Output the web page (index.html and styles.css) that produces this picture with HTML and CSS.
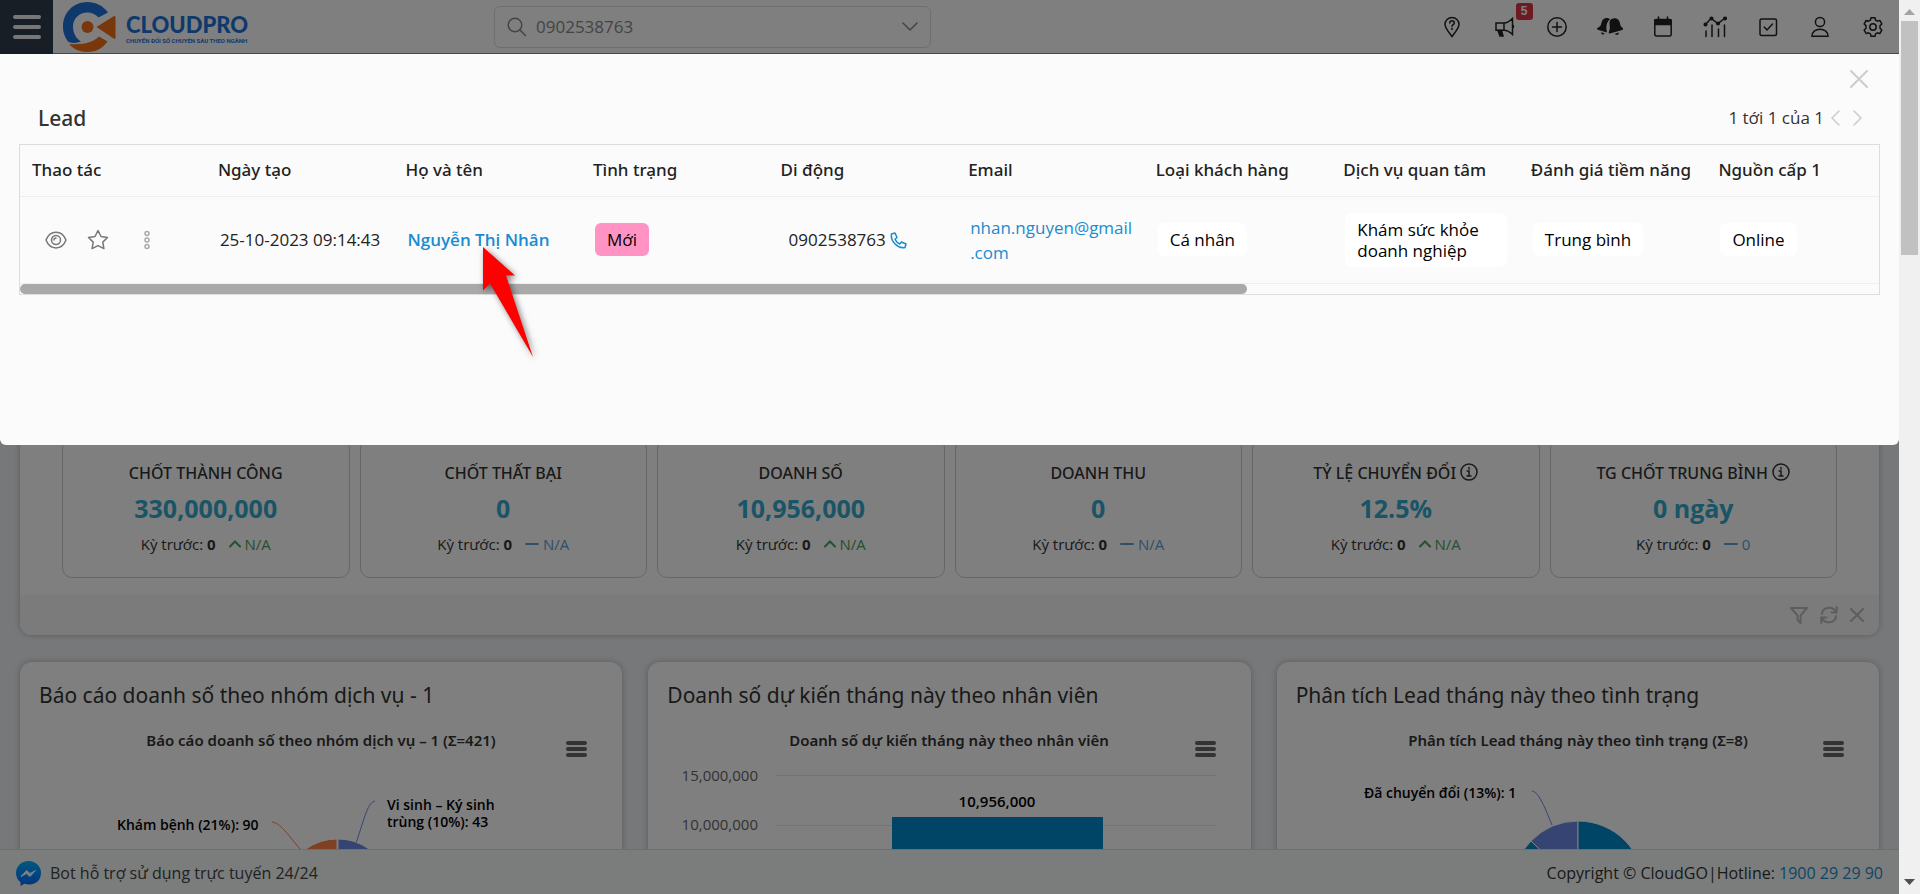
FILE: index.html
```html
<!DOCTYPE html>
<html lang="vi">
<head>
<meta charset="utf-8">
<title>CloudPro</title>
<link rel="stylesheet" href="styles.css">
</head>
<body>
<div class="screen">
  <div class="page">
    <header class="topbar">
      <button class="menu-button" aria-label="Menu"><span></span><span></span><span></span></button>
      <a class="logo" href="#" aria-label="CloudPro">
        <svg class="logo-mark" width="54" height="52" viewBox="0 0 54 52">
          <path d="M46 11.5C41 4.500 33.500 1 25.500 1 11 1 1 12 1 25.500c0 7 2.500 12 5.500 15.500 5 1.500 9 1 12.500-.5-5-3-8-8.500-8-15 0-8 6.500-14 14.500-14 4.500 0 8.500 2 11 5z" fill="#1e73d8"/>
          <path d="M7 43c4 5 11 8 18.500 8 8.500 0 15.500-4 20-10.500L37 35.500c-6 6-16 8.500-30 7.500z" fill="#f07018"/>
          <circle cx="25.500" cy="26" r="6" fill="#f07018"/>
          <path d="M34.500 26 52 15q1.500-.5 1.500 1.500v20q0 2-1.500 1.200z" fill="#f07018"/>
        </svg>
        <span class="logo-text"><b>CLOUDPRO</b><small>CHUYỂN ĐỔI SỐ CHUYÊN SÂU THEO NGÀNH</small></span>
      </a>
      <div class="search">
        <svg width="20" height="20" viewBox="0 0 20 20" class="line"><circle cx="8" cy="8" r="6.800"/><path d="m13 13 5.500 5.500"/></svg>
        <input type="text" value="0902538763" aria-label="Tìm kiếm">
        <button aria-label="Mở rộng"><svg width="16" height="10" viewBox="0 0 16 10" class="line"><path d="m1 1 7 7 7-7"/></svg></button>
      </div>
      <nav class="tools">
        <button aria-label="Trợ giúp"><svg width="22" height="22" viewBox="0 0 22 22" class="line"><path d="M11 20.500C8 16.500 4 12 4 8.500a7 7 0 0 1 14 0c0 3.500-4 8-7 12z"/><path d="M8.800 7c.2-3 4.600-2.800 4.500 0 0 1.700-2.300 1.500-2.300 3.300M11 12.200v1.300"/></svg></button>
        <button aria-label="Thông báo tính năng"><svg width="22" height="22" viewBox="0 0 22 22" class="line"><path d="M2 7h8c3.500 0 6-2 8.500-4.500v16C16 16 13.500 14.200 10 14.200H2zM10 7v7M18.500 8.500q2 2 0 4"/><path d="M4 14.500 6 20h3l-1.500-5.500z" fill="currentColor"/></svg><span class="badge">5</span></button>
        <button aria-label="Thêm"><svg width="22" height="22" viewBox="0 0 22 22" class="line"><circle cx="11" cy="11" r="9.200"/><path d="M11 6.500v9M6.500 11h9"/></svg></button>
        <button aria-label="Chuông"><svg width="26" height="22" viewBox="0 0 26 22"><path d="M11.500 2.200C7 1 5 4 4.400 7c-.5 2.600-1.500 3.700-3.700 4.700-1 .6-.8 1.800 0 2l9.300 2.700c-1.200-5-.8-10.200 3-13.200zM4 16.200l3.500 1c-.6 2.200-3.300 1.500-3.500-1zM14.300 3c5.500-2.400 8 .8 8.600 4 .5 2.600.9 3.700 2.700 4.700.8.500.6 2-.2 2.200L12.700 17.600c-1.200-.2-1.200-1.200-.7-2.200C14.300 11 10.500 6.500 14.300 3zM18 17.800l4-1.200c0 2.600-3.200 3.200-4 1.200z" fill="currentColor"/></svg></button>
        <button aria-label="Lịch"><svg width="22" height="22" viewBox="0 0 22 22" class="line"><rect x="2.800" y="3.500" width="16.400" height="16.500" rx="1.500"/><path d="M3 4h16v4.500H3z" fill="currentColor"/><path d="M6.500 1v3M15.500 1v3"/></svg></button>
        <button aria-label="Báo cáo"><svg width="24" height="22" viewBox="0 0 24 22" class="line"><path d="m2.500 8.500 5.500-6 7 5 7-5.500M3 15v5.500M9 9v11.500M15.500 13v7.500M21.500 9v11.500"/><g fill="currentColor"><circle cx="2.500" cy="8.500" r="1.300"/><circle cx="8.500" cy="2.500" r="1.300"/><circle cx="15" cy="7.500" r="1.300"/><circle cx="22" cy="2.500" r="1.300"/></g></svg></button>
        <button aria-label="Công việc"><svg width="22" height="22" viewBox="0 0 22 22" class="line"><rect x="3" y="3" width="16.500" height="16.500" rx="1.500"/><path d="m7.200 11 2.800 3 5.500-6"/></svg></button>
        <button aria-label="Tài khoản"><svg width="22" height="22" viewBox="0 0 22 22" class="line"><circle cx="11" cy="6" r="4.600"/><path d="M3 20.300c0-9.500 16-9.500 16 0z"/></svg></button>
        <button aria-label="Cài đặt"><svg width="22" height="22" viewBox="0 0 22 22" class="line"><path d="M9 1.700h4l.6 2.500 1.800 1 2.400-.8 2 3.500L18 9.800v2.400l1.800 1.900-2 3.500-2.400-.8-1.800 1-.6 2.500H9l-.6-2.500-1.800-1-2.400.8-2-3.500L4 12.200V9.800L2.200 7.900l2-3.500 2.400.8 1.800-1z" stroke-linejoin="round"/><circle cx="11" cy="11" r="3.200"/></svg></button>
      </nav>
    </header>

    <main class="dashboard">
      <section class="kpi-panel">
        <div class="kpi-grid">
          <article class="kpi"><h3>CHỐT THÀNH CÔNG</h3><strong>330,000,000</strong><p>Kỳ trước: <b>0</b><span class="up"><svg width="12" height="8" viewBox="0 0 12 8" class="line bold"><path d="m1 6.500 5-5 5 5"/></svg> N/A</span></p></article>
          <article class="kpi"><h3>CHỐT THẤT BẠI</h3><strong>0</strong><p>Kỳ trước: <b>0</b><span class="flat"><svg width="14" height="8" viewBox="0 0 14 8" class="line bold"><path d="M1 4h12"/></svg> N/A</span></p></article>
          <article class="kpi"><h3>DOANH SỐ</h3><strong>10,956,000</strong><p>Kỳ trước: <b>0</b><span class="up"><svg width="12" height="8" viewBox="0 0 12 8" class="line bold"><path d="m1 6.500 5-5 5 5"/></svg> N/A</span></p></article>
          <article class="kpi"><h3>DOANH THU</h3><strong>0</strong><p>Kỳ trước: <b>0</b><span class="flat"><svg width="14" height="8" viewBox="0 0 14 8" class="line bold"><path d="M1 4h12"/></svg> N/A</span></p></article>
          <article class="kpi"><h3>TỶ LỆ CHUYỂN ĐỔI <svg class="line info" width="18" height="18" viewBox="0 0 18 18"><circle cx="9" cy="9" r="8"/><path d="M7.200 8H9v5M7 13h4M9 4.500v1.500"/></svg></h3><strong>12.5%</strong><p>Kỳ trước: <b>0</b><span class="up"><svg width="12" height="8" viewBox="0 0 12 8" class="line bold"><path d="m1 6.500 5-5 5 5"/></svg> N/A</span></p></article>
          <article class="kpi"><h3>TG CHỐT TRUNG BÌNH <svg class="line info" width="18" height="18" viewBox="0 0 18 18"><circle cx="9" cy="9" r="8"/><path d="M7.200 8H9v5M7 13h4M9 4.500v1.500"/></svg></h3><strong>0 ngày</strong><p>Kỳ trước: <b>0</b><span class="flat"><svg width="14" height="8" viewBox="0 0 14 8" class="line bold"><path d="M1 4h12"/></svg> 0</span></p></article>
        </div>
        <div class="panel-tools">
          <button aria-label="Lọc"><svg width="18" height="18" viewBox="0 0 18 18" class="line bold"><path d="M1 2h16l-6.500 7.500V17L7.500 14V9.500z" stroke-linejoin="round"/></svg></button>
          <button aria-label="Làm mới"><svg width="18" height="18" viewBox="0 0 18 18" class="line bold"><path d="M2 8c.5-7.500 11-8.500 14-2M16.700 1v5.500H11.500M16 10c-.5 7.500-11 8.500-14 2M1.300 17v-5.500h5.200"/></svg></button>
          <button aria-label="Đóng"><svg width="14" height="14" viewBox="0 0 14 14" class="line bold"><path d="m1 1 12 12M13 1 1 13"/></svg></button>
        </div>
      </section>

      <div class="charts">
        <section class="chart-card">
          <h2>Báo cáo doanh số theo nhóm dịch vụ - 1</h2>
          <button class="chart-menu" aria-label="Menu biểu đồ"><span></span><span></span><span></span></button>
          <svg class="chart" width="602" height="150">
            <text class="chart-title" x="301" y="24">Báo cáo doanh số theo nhóm dịch vụ – 1 (Σ=421)</text>
            <text class="data-label" x="97" y="108">Khám bệnh (21%): 90</text>
            <text class="data-label" x="367" y="88">Vi sinh – Ký sinh</text>
            <text class="data-label" x="367" y="105">trùng (10%): 43</text>
            <path class="leader orange" d="M252 100c8 1 14 10 32 32"/>
            <path class="leader indigo" d="M355 79c-8 1-12 23-19 42"/>
            <path class="slice" fill="#ff8046" d="M317 170V117a53 53 0 0 0-51 38z"/>
            <path class="slice" fill="#6a88e4" d="M318 170V117a53 53 0 0 1 31 10z"/>
            <path class="slice" fill="#6a88e4" d="m318 170 31-43a53 53 0 0 1 22 43z"/>
          </svg>
        </section>
        <section class="chart-card">
          <h2>Doanh số dự kiến tháng này theo nhân viên</h2>
          <button class="chart-menu" aria-label="Menu biểu đồ"><span></span><span></span><span></span></button>
          <svg class="chart" width="602" height="150">
            <text class="chart-title" x="301" y="24">Doanh số dự kiến tháng này theo nhân viên</text>
            <path class="grid-line" d="M128 53.500h441M128 103.500h441"/>
            <text class="axis-label" x="110" y="59">15,000,000</text>
            <text class="axis-label" x="110" y="108">10,000,000</text>
            <rect x="244" y="95" width="211" height="60" fill="#008acc"/>
            <text class="data-label value" x="349" y="85">10,956,000</text>
          </svg>
        </section>
        <section class="chart-card">
          <h2>Phân tích Lead tháng này theo tình trạng</h2>
          <button class="chart-menu" aria-label="Menu biểu đồ"><span></span><span></span><span></span></button>
          <svg class="chart" width="602" height="150">
            <text class="chart-title" x="301" y="24">Phân tích Lead tháng này theo tình trạng (Σ=8)</text>
            <text class="data-label" x="87" y="76">Đã chuyển đổi (13%): 1</text>
            <path class="leader indigo" d="M255 69c7 1 13 17 20 34"/>
            <path class="slice" fill="#6a88e4" d="M301 165V99a66 66 0 0 0-47 20z"/>
            <path class="slice" fill="#008acc" d="M301 165V99a66 66 0 0 1 66 66z"/>
            <path class="slice" fill="#008acc" d="m301 165-47-46a66 66 0 0 0-19 46z"/>
          </svg>
        </section>
      </div>
    </main>

    <footer class="footer">
      <a class="bot" href="#"><svg width="25" height="27" viewBox="0 0 25 27"><defs><linearGradient id="bot" x2="0" y2="1"><stop offset="0" stop-color="#00b2ff"/><stop offset="1" stop-color="#006aff"/></linearGradient></defs><path d="M12.500 1C5.500 1 0 6 0 13c0 4 1.800 7.200 4.500 9.300V26l4-2.200c10 2.600 16.500-3 16.500-10.800C25 6 19.500 1 12.500 1z" fill="url(#bot)"/><path d="m5 16.500 5.500-6 3.500 3 5.500-3-5.500 6-3.500-3z" fill="#fff" stroke="#fff"/></svg>Bot hỗ trợ sử dụng trực tuyến 24/24</a>
      <p>Copyright © CloudGO|Hotline: <a href="#">1900 29 29 90</a></p>
    </footer>

    <div class="backdrop"></div>

    <div class="modal" role="dialog" aria-label="Lead">
      <div class="modal-top"><button aria-label="Đóng"><svg width="18" height="18" viewBox="0 0 18 18" class="line bold"><path d="m1 1 16 16M17 1 1 17"/></svg></button></div>
      <div class="modal-head">
        <h1>Lead</h1>
        <div class="pager"><span>1 tới 1 của 1</span>
          <button aria-label="Trang trước"><svg width="9" height="16" viewBox="0 0 9 16" class="line"><path d="M8 1 1 8l7 7"/></svg></button>
          <button aria-label="Trang sau"><svg width="9" height="16" viewBox="0 0 9 16" class="line"><path d="m1 1 7 7-7 7"/></svg></button>
        </div>
      </div>
      <div class="table-box">
        <table>
          <thead><tr><th>Thao tác</th><th>Ngày tạo</th><th>Họ và tên</th><th>Tình trạng</th><th>Di động</th><th>Email</th><th>Loại khách hàng</th><th>Dịch vụ quan tâm</th><th>Đánh giá tiềm năng</th><th>Nguồn cấp 1</th></tr></thead>
          <tbody><tr>
            <td><div class="row-actions">
              <button aria-label="Xem"><svg width="22" height="18" viewBox="0 0 22 18" class="line"><path d="M1 9C5-1.500 17-1.500 21 9 17 19.500 5 19.500 1 9z"/><circle cx="11" cy="9" r="4.500"/><path d="M9 9c0-1.500 1-2 2-2"/></svg></button>
              <button aria-label="Theo dõi"><svg width="22" height="22" viewBox="0 0 22 22" class="line"><path d="m11 1.500 3 6 6.500 1-4.700 4.600 1.100 6.600L11 16.600l-5.900 3.100 1.100-6.600L1.500 8.500l6.500-1z" stroke-linejoin="round"/></svg></button>
              <button aria-label="Thêm thao tác" class="more"><svg width="8" height="20" viewBox="0 0 8 20" class="line"><circle cx="4" cy="3.500" r="2"/><circle cx="4" cy="10" r="2"/><circle cx="4" cy="16.500" r="2"/></svg></button>
            </div></td>
            <td>25-10-2023 09:14:43</td>
            <td><a class="name" href="#">Nguyễn Thị Nhân</a></td>
            <td><span class="tag pink">Mới</span></td>
            <td><span class="phone">0902538763 <svg width="17" height="17" viewBox="0 0 17 17" class="line"><path d="M1.500 2 5 1l2 4.500-2 1.700c1 2.200 2.600 3.800 4.800 4.800l1.700-2L16 12l-1 3.500C8 17 0 9 1.500 2z" stroke-linejoin="round"/></svg></span></td>
            <td class="email"><a href="#">nhan.nguyen@gmail<wbr>.com</a></td>
            <td><span class="tag">Cá nhân</span></td>
            <td><span class="tag">Khám sức khỏe doanh nghiệp</span></td>
            <td><span class="tag">Trung bình</span></td>
            <td><span class="tag">Online</span></td>
          </tr></tbody>
        </table>
        <div class="h-scroll"><span></span></div>
      </div>
      <svg class="pointer" width="70" height="130" viewBox="0 0 70 130"><path d="M8 5 40 33.500H31L58 115 15 41.500 8 48.500z" fill="#f00"/></svg>
    </div>
  </div>
  <div class="v-scroll">
    <svg width="11" height="6" viewBox="0 0 11 6"><path d="M0 6 5.500 0 11 6z" fill="#a3a3a3"/></svg>
    <span class="thumb"></span>
    <svg class="down" width="11" height="6" viewBox="0 0 11 6"><path d="M0 0 5.500 6 11 0z" fill="#505050"/></svg>
  </div>
</div>
</body>
</html>
```

FILE: styles.css
```css
* { box-sizing: border-box; }
body { margin: 0; font: 17px/24px "Open Sans", "Noto Sans", sans-serif; color: #333; }
h1, h2, h3, p { margin: 0; font-weight: 400; }
h1, h2, h3, th { font-family: "Noto Sans", sans-serif; }
a { color: #1a8ccf; text-decoration: none; }
button { padding: 0; border: 0; background: none; color: inherit; font: inherit; display: flex; align-items: center; justify-content: center; }
.line { fill: none; stroke: currentColor; stroke-width: 1.5; stroke-linecap: round; }
.bold { stroke-width: 2; }

.screen { display: grid; grid-template-columns: minmax(0, 1fr) 21px; height: 100vh; overflow: hidden; }
.page { position: relative; display: flex; flex-direction: column; min-height: 0; background: #eef0f4; overflow: hidden; }

.topbar { flex: none; display: flex; align-items: center; height: 54px; background: #fff; border-bottom: 1px solid #f07038; }
.menu-button { width: 53px; height: 54px; background: #2e3d4c; flex-direction: column; gap: 6px; }
.menu-button span { width: 28px; height: 4px; border-radius: 2px; background: #eee; }
.logo { display: flex; align-items: center; gap: 10px; width: 431px; padding-left: 9px; }
.logo-text { display: flex; flex-direction: column; padding-top: 4px; color: #1e73d8; white-space: nowrap; }
.logo-text b { font: 900 22px/24px Lato, sans-serif; }
.logo-text small { font: 700 6px/8px Roboto, sans-serif; }
.search { display: flex; align-items: center; gap: 9px; width: 437px; height: 42px; margin-left: 10px; padding: 0 12px; border: 1px solid #ddd; border-radius: 6px; color: #888; }
.search input { flex: 1; min-width: 0; padding: 0; border: 0; outline: 0; background: none; color: #888; font: inherit; }
.tools { display: flex; width: 473px; margin-left: auto; color: #222; }
.tools button { position: relative; flex: 1; height: 53px; }
.badge { position: absolute; left: 37px; top: 3px; width: 17px; height: 17px; border-radius: 3px; background: #dc3545; color: #fff; font: 700 12px/17px "Liberation Sans", sans-serif; }

.dashboard { flex: 1; min-height: 0; padding: 16px 20px 0; overflow: hidden; }
.kpi-panel { background: #fff; border-radius: 12px; box-shadow: 0 0 6px rgba(0, 0, 0, .25); overflow: hidden; }
.kpi-grid { display: grid; grid-template-columns: repeat(6, minmax(0, 1fr)); gap: 10px; padding: 368px 42px 17px; }
.kpi { padding: 22px 0 18px; border: 1px solid #ccc; border-radius: 10px; text-align: center; color: #333; }
.kpi h3 { font-size: 16px; line-height: 24px; font-weight: 500; }
.kpi strong { display: block; padding: 5px 0 4px; color: #32aacc; font-size: 25px; line-height: 36px; }
.kpi p { font-size: 15px; line-height: 29px; }
.kpi p span { margin-left: 13px; }
.info { vertical-align: -2px; }
.up { color: #4ba05c; }
.flat { color: #60a0cf; }
.kpi p svg { vertical-align: 2px; }
.panel-tools { display: flex; align-items: center; justify-content: flex-end; gap: 12px; height: 40px; padding: 0 15px; background: #f7f7f7; color: #bbb; }

.charts { display: grid; grid-template-columns: repeat(3, minmax(0, 1fr)); gap: 26px; margin-top: 27px; }
.chart-card { position: relative; height: 400px; background: #fff; border-radius: 12px; box-shadow: 0 0 6px rgba(0, 0, 0, .25); }
.chart-card h2 { padding: 17px 19px 11px; font-size: 21px; line-height: 32px; }
.chart { display: block; overflow: hidden; font-family: "Open Sans", sans-serif; }
.chart-title { font-family: "Noto Sans", sans-serif; font-size: 15px; font-weight: 600; text-anchor: middle; fill: #333; }
.data-label { font-size: 14px; font-weight: 600; fill: #000; }
.data-label.value { font-size: 15px; text-anchor: middle; }
.axis-label { font-size: 15px; text-anchor: end; fill: #666; }
.grid-line { stroke: #e6e6e6; fill: none; }
.leader { fill: none; stroke-width: 1; }
.orange { stroke: #ff8046; }
.indigo { stroke: #6a88e4; }
.slice { stroke: #fff; stroke-width: 1; }
.chart-menu { position: absolute; top: 79px; right: 35px; width: 21px; flex-direction: column; gap: 2px; }
.chart-menu span { width: 21px; height: 4px; border-radius: 2px; background: #666; }

.footer { flex: none; display: flex; align-items: center; justify-content: space-between; height: 45px; padding: 2px 16px 0; background: #f7faf9; border-top: 1px solid #ddd; font-size: 16px; }
.bot { display: flex; align-items: center; gap: 9px; color: #444; }

.backdrop { position: absolute; inset: 0; background: rgba(0, 0, 0, .5); }

.modal { position: absolute; top: 54px; left: 0; right: 0; height: 391px; padding: 0 19px; background: #fbfbfb; border-radius: 0 0 6px 6px; color: #222; }
.modal-top { display: flex; justify-content: flex-end; padding: 16px 12px 8px 0; color: #ccc; }
.modal-head { display: flex; align-items: center; justify-content: space-between; height: 48px; padding: 0 16px 5px 19px; }
.modal-head h1 { font-size: 21px; line-height: 32px; font-weight: 500; color: #333; }
.pager { display: flex; align-items: center; gap: 8px; color: #333; }
.pager span { margin-right: -4px; }
.pager button { width: 14px; color: #ccc; }
.table-box { border: 1px solid #ddd; overflow: hidden; }
table { width: 100%; table-layout: fixed; border-collapse: collapse; }
th, td { text-align: left; border-bottom: 1px solid #eee; }
th { width: 10.09%; height: 51px; padding: 0 0 0 12px; font-size: 17px; font-weight: 500; white-space: nowrap; }
th:first-child { width: 10%; }
th:last-child { width: auto; }
td { height: 87px; padding: 0 12px 0 14px; line-height: 25px; }
td:nth-child(2) { padding-right: 0; white-space: nowrap; }
.name { font-weight: 600; white-space: nowrap; }
.row-actions { display: flex; align-items: center; gap: 20px; padding-left: 11px; color: #777; }
.more { margin-left: 14px; color: #aaa; }
.phone { padding-left: 6px; white-space: nowrap; }
.phone svg { color: #1a8ccf; vertical-align: -3px; }
td.email { padding-right: 0; }
.tag { display: inline-block; padding: 6px 12px; border-radius: 6px; background: #fff; color: #000; line-height: 21px; }
.pink { background: #ff94c4; }
.h-scroll { height: 10px; }
.h-scroll span { display: block; width: 66%; height: 10px; border-radius: 5px; background: #a9a9a9; }
.pointer { position: absolute; left: 475px; top: 188px; filter: drop-shadow(2px 2px 3px rgba(0, 0, 0, .5)); }

.v-scroll { display: flex; flex-direction: column; align-items: center; padding: 9px 0; background: #f0f0f0; }
.thumb { width: 17px; height: 234px; margin-top: 6px; background: #c1c1c1; }
.down { margin-top: auto; }
```
